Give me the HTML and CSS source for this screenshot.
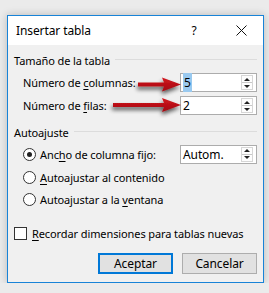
FILE: index.html
```html
<!DOCTYPE html>
<html lang="es">
<head>
  <meta charset="UTF-8">
  <title>Insertar tabla</title>
  <link rel="stylesheet" href="styles.css">
</head>
<body>
  <div class="dialog">
    <div class="titlebar">
      <span class="title">Insertar tabla</span>
      <span class="help">?</span>
      <span class="close">
        <svg width="11" height="11" viewBox="0 0 11 11"><path d="M0.5 0.5 L10.5 10.5 M10.5 0.5 L0.5 10.5" stroke="#111" stroke-width="1" fill="none"/></svg>
      </span>
    </div>

    <div class="content">
      <div class="group-title"><span>Tamaño de la tabla</span><i class="rule"></i></div>

      <div class="row field cols">
        <span class="label">Número de <u>c</u>olumnas:</span>
        <div class="spin">
          <span class="value"><span class="sel">5</span></span>
          <span class="btns"><b class="up"></b><b class="down"></b></span>
        </div>
      </div>
      <div class="row field rows">
        <span class="label">Número de <u>f</u>ilas:</span>
        <div class="spin">
          <span class="value">2</span>
          <span class="btns"><b class="up"></b><b class="down"></b></span>
        </div>
      </div>

      <div class="group-title second"><span>Autoajuste</span><i class="rule"></i></div>

      <div class="row radio-row r1">
        <span class="radio checked"></span>
        <span class="label">Anc<u>h</u>o de columna fijo:</span>
        <div class="spin">
          <span class="value">Autom.</span>
          <span class="btns"><b class="up"></b><b class="down"></b></span>
        </div>
      </div>
      <div class="row radio-row r2">
        <span class="radio"></span>
        <span class="label"><u>A</u>utoajustar al contenido</span>
      </div>
      <div class="row radio-row r3">
        <span class="radio"></span>
        <span class="label">Autoajustar a la <u>v</u>entana</span>
      </div>

      <div class="row check-row">
        <span class="check"></span>
        <span class="label"><u>R</u>ecordar dimensiones para tablas nuevas</span>
      </div>

      <div class="buttons">
        <button class="default">Aceptar</button>
        <button>Cancelar</button>
      </div>
    </div>

    <svg class="arrows" width="269" height="293" viewBox="0 0 269 293">
      <defs>
        <linearGradient id="red" x1="0" y1="0" x2="0" y2="1">
          <stop offset="0" stop-color="#d4161f"/>
          <stop offset="1" stop-color="#a00a10"/>
        </linearGradient>
        <filter id="sh" x="-20%" y="-60%" width="140%" height="260%">
          <feGaussianBlur in="SourceAlpha" stdDeviation="2"/>
          <feOffset dx="-1" dy="3"/>
          <feComponentTransfer><feFuncA type="linear" slope="0.65"/></feComponentTransfer>
          <feMerge><feMergeNode/><feMergeNode in="SourceGraphic"/></feMerge>
        </filter>
      </defs>
      <g filter="url(#sh)" fill="url(#red)">
        <path d="M138 82.5 L164 82.5 L162 77.5 L181 84.5 L162 91.5 L164 86.5 L138 86.5 Z"/>
        <path d="M113 103 L164 103 L162 98 L181 105 L162 112 L164 107 L113 107 Z"/>
      </g>
    </svg>
  </div>
</body>
</html>
```

FILE: styles.css
```css
html {
  background: #ebebeb;
}

body {
  margin: 0;
  padding: 15px 0 0 7px;
  font-family: "Noto Sans", "Open Sans", sans-serif;
  font-size: 11px;
  letter-spacing: -0.1px;
  color: #000;
}

.dialog {
  position: relative;
  width: 255px;
  height: 266px;
  border: 1px solid #1883d7;
  background: #f0f0f0;
  box-shadow: 0 0 8px rgba(0,0,0,0.22);
  display: flex;
  flex-direction: column;
}

.titlebar {
  height: 29px;
  background: #fff;
  display: flex;
  align-items: center;
  padding-left: 8px;
  font-size: 12px;
}

.title {
  flex: 1;
}

.help {
  width: 8px;
  margin-right: 38px;
  text-align: center;
}

.close {
  width: 11px;
  margin-right: 16px;
  display: flex;
}

.content {
  flex: 1;
  padding: 7px 6px 0 6px;
  display: flex;
  flex-direction: column;
}

.group-title {
  display: flex;
  align-items: center;
  height: 16px;
}

.group-title .rule {
  flex: 1;
  height: 1px;
  background: #dcdcdc;
  margin-left: 5px;
  margin-top: -2px;
}

.group-title.second {
  margin-top: 9px;
}

.row {
  display: flex;
  align-items: center;
}

.label {
  flex: 1;
  white-space: nowrap;
}

u {
  text-decoration-thickness: 1px;
  text-underline-offset: 2px;
}

.field {
  padding-left: 9px;
  height: 19px;
}

.field.cols {
  margin-top: 5px;
}

.field.rows {
  margin-top: 4px;
}

.spin {
  box-sizing: border-box;
  width: 77px;
  height: 19px;
  border: 1px solid #acacac;
  background: #fff;
  display: flex;
  align-items: center;
}

.spin .value {
  flex: 1;
  padding-left: 2px;
  font-size: 12px;
}

.sel {
  background: #99c9ef;
  padding: 1px 1px;
}

.btns {
  box-sizing: border-box;
  width: 12px;
  height: 15px;
  margin-right: 3px;
  display: flex;
  flex-direction: column;
  border: 1px solid #d6d6d6;
  background: #fdfdfd;
}

.btns b {
  flex: 1;
  display: flex;
  align-items: center;
  justify-content: center;
}

.btns b::before {
  content: '';
  border-left: 3px solid transparent;
  border-right: 3px solid transparent;
}

.btns .up::before {
  border-bottom: 3px solid #222;
}

.btns .down {
  border-top: 1px solid #c8c8c8;
}

.btns .down::before {
  border-top: 3px solid #222;
}

.radio-row {
  padding-left: 9px;
  height: 20px;
}

.radio-row.r1 {
  margin-top: 4px;
}

.radio-row.r2 {
  margin-top: 3px;
}

.radio-row.r3 {
  margin-top: 2px;
}

.radio {
  box-sizing: border-box;
  width: 13px;
  height: 13px;
  border: 1px solid #333;
  border-radius: 50%;
  background: #fff;
  margin-right: 4px;
  display: flex;
  align-items: center;
  justify-content: center;
}

.radio.checked::after {
  content: '';
  width: 5px;
  height: 5px;
  border-radius: 50%;
  background: #222;
}

.check-row {
  margin-top: 16px;
  height: 16px;
}

.check {
  box-sizing: border-box;
  width: 13px;
  height: 13px;
  border: 1px solid #333;
  background: #fff;
  margin-right: 5px;
}

.buttons {
  margin-top: 12px;
  display: flex;
  justify-content: flex-end;
  gap: 9px;
}

button {
  box-sizing: border-box;
  width: 75px;
  height: 21px;
  font-family: inherit;
  font-size: 12px;
  letter-spacing: -0.1px;
  background: #e1e1e1;
  border: 1px solid #adadad;
  padding: 0;
  color: #000;
}

button.default {
  border: 2px solid #0078d7;
}

.arrows {
  position: absolute;
  left: -8px;
  top: -16px;
  pointer-events: none;
}
```
